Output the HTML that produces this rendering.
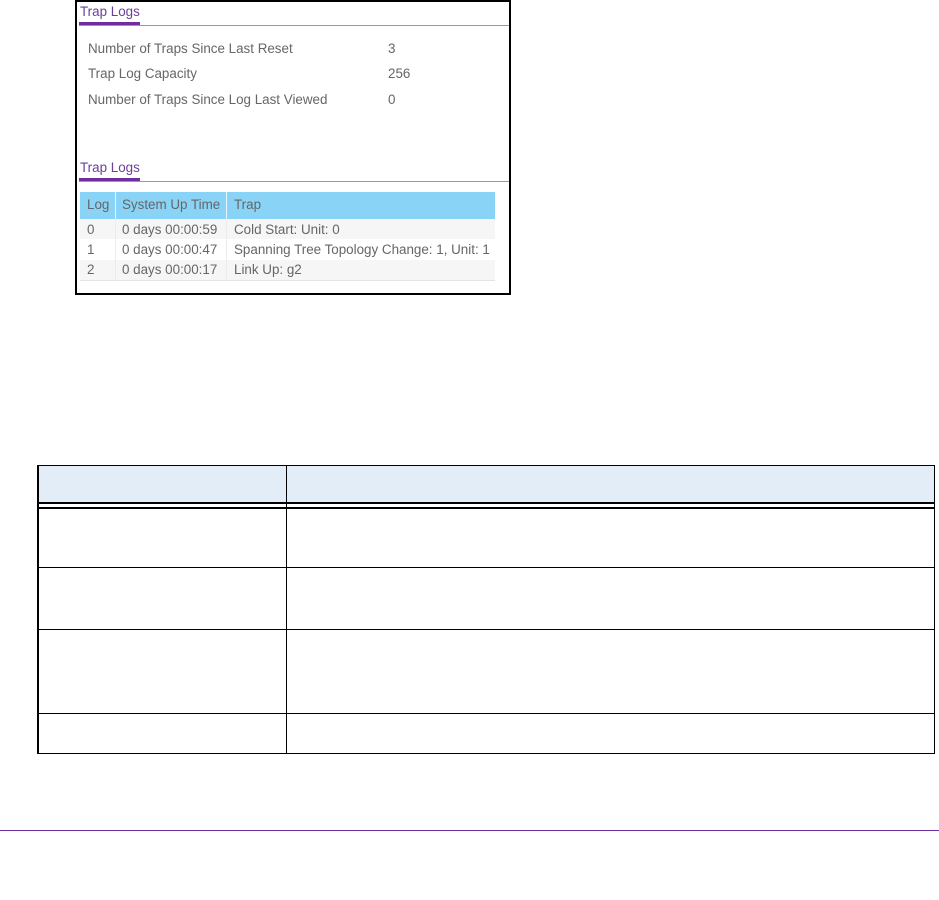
<!DOCTYPE html>
<html>
<head>
<meta charset="utf-8">
<style>
html,body{margin:0;padding:0;background:#fff;width:939px;height:900px;overflow:hidden}
body{position:relative;font-family:"Liberation Sans",sans-serif}
.r{position:absolute}
.t{position:absolute;font-size:13.4px;line-height:16px;color:#666;white-space:nowrap;filter:blur(.3px)}
.p{color:#6b3f9b}
</style>
</head>
<body>
<!-- screenshot frame -->
<div class="r" style="left:75px;top:0;width:436px;height:295px;box-sizing:border-box;border:2px solid #000"></div>

<!-- tabs -->
<div class="t p" style="left:80px;top:4px">Trap Logs</div>
<div class="r" style="left:79px;top:25px;width:430px;height:1px;background:#a98ac9"></div>
<div class="r" style="left:79px;top:22px;width:61px;height:3px;background:#6f2da0"></div>

<div class="t" style="left:88px;top:41px">Number of Traps Since Last Reset</div>
<div class="t" style="left:388px;top:41px">3</div>
<div class="t" style="left:88px;top:66px">Trap Log Capacity</div>
<div class="t" style="left:388px;top:66px">256</div>
<div class="t" style="left:88px;top:92px">Number of Traps Since Log Last Viewed</div>
<div class="t" style="left:388px;top:92px">0</div>

<div class="t p" style="left:80px;top:160px">Trap Logs</div>
<div class="r" style="left:79px;top:181px;width:430px;height:1px;background:#a98ac9"></div>
<div class="r" style="left:79px;top:178px;width:61px;height:3px;background:#6f2da0"></div>

<!-- small table -->
<div class="r" style="left:80px;top:192px;width:415px;height:27px;background:#89d3f6"></div>
<div class="r" style="left:80px;top:219px;width:415px;height:20px;background:#f6f6f6"></div>
<div class="r" style="left:80px;top:260px;width:415px;height:20px;background:#f6f6f6"></div>
<div class="r" style="left:80px;top:280px;width:415px;height:1px;background:#e4e4e4"></div>
<div class="r" style="left:115px;top:192px;width:1px;height:27px;background:#e4f5fd"></div>
<div class="r" style="left:226px;top:192px;width:1px;height:27px;background:#e4f5fd"></div>
<div class="r" style="left:115px;top:219px;width:1px;height:61px;background:#ececec"></div>
<div class="r" style="left:226px;top:219px;width:1px;height:61px;background:#ececec"></div>

<div class="t" style="left:87px;top:197px">Log</div>
<div class="t" style="left:122px;top:197px">System Up Time</div>
<div class="t" style="left:234px;top:197px">Trap</div>

<div class="t" style="left:87px;top:222px">0</div>
<div class="t" style="left:122px;top:222px">0 days 00:00:59</div>
<div class="t" style="left:234px;top:222px">Cold Start: Unit: 0</div>
<div class="t" style="left:87px;top:242px">1</div>
<div class="t" style="left:122px;top:242px">0 days 00:00:47</div>
<div class="t" style="left:234px;top:242px">Spanning Tree Topology Change: 1, Unit: 1</div>
<div class="t" style="left:87px;top:262px">2</div>
<div class="t" style="left:122px;top:262px">0 days 00:00:17</div>
<div class="t" style="left:234px;top:262px">Link Up: g2</div>

<!-- large table -->
<div class="r" style="left:38px;top:466px;width:896px;height:36px;background:#e3edf7"></div>
<div class="r" style="left:37px;top:465px;width:898px;height:1px;background:#000"></div>
<div class="r" style="left:37px;top:502px;width:898px;height:2px;background:#000"></div>
<div class="r" style="left:37px;top:507px;width:898px;height:2px;background:#000"></div>
<div class="r" style="left:37px;top:567px;width:898px;height:1px;background:#000"></div>
<div class="r" style="left:37px;top:629px;width:898px;height:1px;background:#000"></div>
<div class="r" style="left:37px;top:713px;width:898px;height:1px;background:#000"></div>
<div class="r" style="left:37px;top:753px;width:898px;height:1px;background:#000"></div>
<div class="r" style="left:37px;top:465px;width:2px;height:289px;background:#000"></div>
<div class="r" style="left:934px;top:465px;width:1px;height:289px;background:#000"></div>
<div class="r" style="left:286px;top:465px;width:1px;height:289px;background:#000"></div>

<!-- footer rule -->
<div class="r" style="left:0;top:830px;width:939px;height:1px;background:#6f2da0"></div>
</body>
</html>
